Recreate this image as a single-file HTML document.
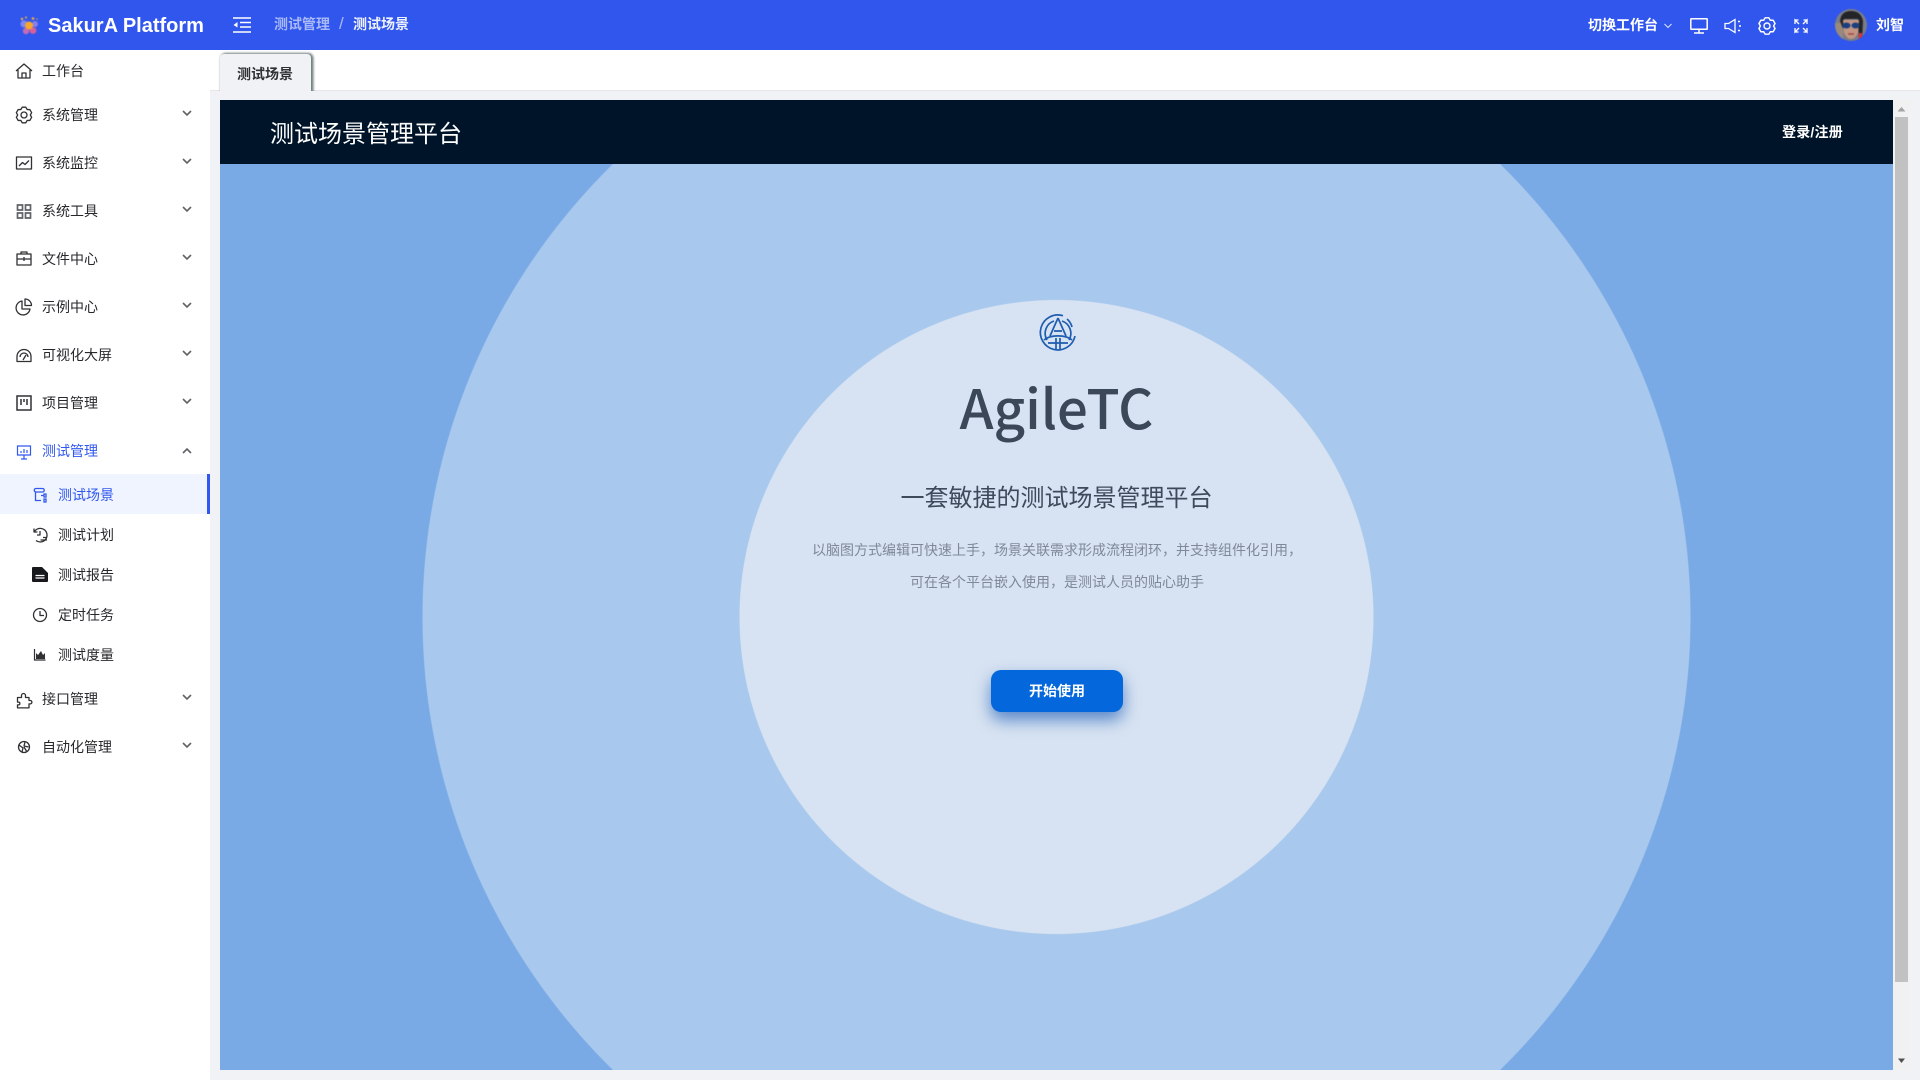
<!DOCTYPE html>
<html lang="zh"><head><meta charset="utf-8"><title>测试场景</title>
<style>
*{box-sizing:border-box}
html,body{margin:0;width:1920px;height:1080px;overflow:hidden;background:#f0f2f5;font-family:"Liberation Sans","Noto Sans CJK SC",sans-serif;font-size:14px;color:#26282b}
.a{position:absolute}
.t{position:absolute;white-space:nowrap;line-height:20px;height:20px}
svg{position:absolute;overflow:visible}
.i{fill:none;stroke:#303133;stroke-width:1.3;stroke-linejoin:round}
.c{fill:none;stroke:#606266;stroke-width:1.6}
</style></head><body>
<div class="a" style="left:0;top:0;width:1920px;height:50px;background:#3056ed"></div>
<svg style="left:18px;top:14px;filter:blur(.4px)" width="24" height="24" viewBox="0 0 24 24">
<circle cx="4" cy="5" r="1.200" fill="#f5b342"/><circle cx="8" cy="3.500" r="1" fill="#f5b342"/><circle cx="15" cy="4.500" r="1.300" fill="#f5b342"/><circle cx="19" cy="5" r=".8" fill="#d8a050"/>
<circle cx="6" cy="10" r="3.600" fill="#7f88f0"/><circle cx="17" cy="10" r="3" fill="#8a7fe8"/><circle cx="8" cy="17" r="3.200" fill="#c56bb5"/><circle cx="15" cy="16.500" r="3.400" fill="#d8609a"/><circle cx="11" cy="11.500" r="4" fill="#f6a72d"/>
</svg>
<div class="t" style="left:48px;top:16px;font-size:20px;font-weight:700;color:#fff">SakurA Platform</div>
<svg style="left:233px;top:17px" width="18" height="16" viewBox="0 0 18 16"><path d="M0 1h18M7 5.500h11M7 10h11M0 15h18" stroke="#fff" stroke-width="1.500" fill="none"/><path d="M4.500 5v5.500L0.500 8z" fill="#fff"/></svg>
<div class="t" style="left:274px;top:14px;font-weight:700;color:#a9b9f7">测试管理</div>
<div class="t" style="left:339px;top:14px;font-size:17px;color:#a9b9f7">/</div>
<div class="t" style="left:353px;top:14px;font-weight:700;color:#eef2ff">测试场景</div>
<div class="t" style="left:1588px;top:15px;font-weight:700;color:#fff">切换工作台</div>
<svg style="left:1664px;top:23px" width="8" height="6" viewBox="0 0 8 6"><path d="M.5 1l3.500 3.500L7.500 1" fill="none" stroke="#dfe6ff" stroke-width="1"/></svg>
<svg style="left:1690px;top:18px" width="18" height="16" viewBox="0 0 18 16" fill="none" stroke="#fff" stroke-width="1.500"><rect x=".8" y=".8" width="16.400" height="10.500" rx=".5"/><path d="M9 11.500v3M4 15h10"/></svg>
<svg style="left:1724px;top:18px" width="18" height="16" viewBox="0 0 18 16" fill="none" stroke="#fff" stroke-width="1.300"><path d="M1 5.500h3.500L11 1.500v13l-6.500-4H1z"/><path d="M14 3.500h2M15 8h2M14 12.500h2" stroke-width="1.500"/></svg>
<svg style="left:1758px;top:17px" width="18" height="18" viewBox="-9 -9 18 18" fill="none" stroke="#fff" stroke-width="1.400" stroke-linejoin="round"><path transform="scale(1.050)" d="M-1.800-7.800L1.800-7.800L3.150-5.460L5.850-5.460L7.650-2.340L6.300 0L7.650 2.340L5.850 5.460L3.150 5.460L1.800 7.800L-1.800 7.800L-3.150 5.460L-5.850 5.460L-7.650 2.340L-6.300 0L-7.650-2.340L-5.850-5.460L-3.150-5.460Z"/><circle r="3"/></svg>
<svg style="left:1794px;top:19px" width="14" height="14" viewBox="0 0 14 14" fill="none" stroke="#fff" stroke-width="1.300"><path d="M1 5V1l4 4M1 1h3.500M13 5V1L9 5M13 1H9.500M1 9v4l4-4M1 13h3.500M13 9v4L9 9M13 13H9.500"/></svg>
<svg style="left:1835px;top:9px;filter:blur(.4px)" width="32" height="32" viewBox="0 0 32 32"><defs><clipPath id="av"><circle cx="16" cy="16" r="16"/></clipPath></defs><g clip-path="url(#av)"><rect width="32" height="32" fill="#7b7d86"/><rect x="0" y="14" width="8" height="18" fill="#9a8a7c"/><path d="M5 12Q6 2 16 2t12 10l-1 20H24L23 10H9L8 20z" fill="#232427"/><path d="M8 11h16l-1 13q-3 6-7 6t-7-6z" fill="#c39684"/><ellipse cx="11.500" cy="16.500" rx="4" ry="3" fill="#1a3f80"/><ellipse cx="20.500" cy="16.500" rx="4" ry="3" fill="#1a3f80"/><path d="M13 25h6" stroke="#a34848" stroke-width="1.500"/><rect x="24" y="24" width="3" height="6" fill="#e0323c"/></g></svg>
<div class="t" style="left:1876px;top:15px;font-weight:700;color:#fff">刘智</div>

<div class="a" style="left:0;top:50px;width:210px;height:1030px;background:#fff"></div>
<div class="a" style="left:0;top:474px;width:210px;height:40px;background:#eff4fe"></div>
<div class="a" style="left:207px;top:474px;width:3px;height:40px;background:#3057ef"></div>
<div class="t" style="left:42px;top:61px">工作台</div>
<div class="t" style="left:42px;top:105px">系统管理</div>
<div class="t" style="left:42px;top:153px">系统监控</div>
<div class="t" style="left:42px;top:201px">系统工具</div>
<div class="t" style="left:42px;top:249px">文件中心</div>
<div class="t" style="left:42px;top:297px">示例中心</div>
<div class="t" style="left:42px;top:345px">可视化大屏</div>
<div class="t" style="left:42px;top:393px">项目管理</div>
<div class="t" style="left:42px;top:441px;color:#3057ef">测试管理</div>
<div class="t" style="left:58px;top:485px;color:#3057ef">测试场景</div>
<div class="t" style="left:58px;top:525px">测试计划</div>
<div class="t" style="left:58px;top:565px">测试报告</div>
<div class="t" style="left:58px;top:605px">定时任务</div>
<div class="t" style="left:58px;top:645px">测试度量</div>
<div class="t" style="left:42px;top:689px">接口管理</div>
<div class="t" style="left:42px;top:737px">自动化管理</div>
<svg style="left:0;top:0" width="210" height="800" viewBox="0 0 210 800">
<path class="c" d="M183 111l4 4 4-4M183 159l4 4 4-4M183 207l4 4 4-4M183 255l4 4 4-4M183 303l4 4 4-4M183 351l4 4 4-4M183 399l4 4 4-4M183 453l4-4 4 4M183 695l4 4 4-4M183 743l4 4 4-4"/>
<path class="i" d="M16 71l8-7 8 7M18 70v8h12v-8M22 78v-5h4v5"/>
<g transform="translate(24 115)"><path class="i" d="M-1.800-7.800L1.800-7.800L3.150-5.460L5.850-5.460L7.650-2.340L6.300 0L7.650 2.340L5.850 5.460L3.150 5.460L1.800 7.800L-1.800 7.800L-3.150 5.460L-5.850 5.460L-7.650 2.340L-6.300 0L-7.650-2.340L-5.850-5.460L-3.150-5.460Z"/><circle class="i" r="3"/></g>
<path class="i" d="M16.500 157h15v12h-15zM19 166l3.500-3.500 2.500 2 4-4"/>
<path d="M17.500 205h5v5h-5zM25.500 205h5v5h-5zM17.500 213h5v5h-5zM25.500 213h5v5h-5z" fill="none" stroke="#606266" stroke-width="1.700"/>
<path class="i" d="M17 254h14v11H17zM21 254v-2h6v2M17 259h14M24 257v4"/>
<path class="i" d="M22 301a7 7 0 1 0 8 8h-8z"/><path class="i" d="M25 299a6.500 6.500 0 0 1 6.500 6.500H25z"/>
<path class="i" d="M17 361.500v-5a7 7 0 0 1 14 0v5zM20 357a4 4 0 0 1 8 0M23 360l3-5"/>
<path d="M17 396h14v14H17z" fill="none" stroke="#303133" stroke-width="1.500"/><path d="M21 399v6M24 399v3M27 399v6" stroke="#303133" stroke-width="1.500" fill="none"/>
<path d="M17.500 446h13v9h-13zM21 459h6M24 455v4M21 453v-2M24 453v-4M27 453v-3" fill="none" stroke="#3057ef" stroke-width="1.200"/>
<path d="M36 488.500h6.500a1.700 1.700 0 0 1 0 3.500H36a1.700 1.700 0 0 1 0-3.500zM35.500 492v8.500H41M41 495.500h3.500M44 494h2v3h-2zM44 499h2v3h-2z" fill="none" stroke="#3057ef" stroke-width="1.300"/>
<path class="i" d="M34.500 531.500A6.800 6.800 0 1 1 36 540.500M34 528.500v3.500h3.500M40 531v4h-3M40.500 540h6.500M43 537.500h4"/>
<path d="M32 568a1 1 0 0 1 1-1h9l6 6v8a1 1 0 0 1-1 1H33a1 1 0 0 1-1-1z" fill="#17191c"/><path d="M35.500 575.500h9M35.500 578h9" stroke="#fff" stroke-width="1.200"/>
<circle class="i" cx="40" cy="615" r="6.500"/><path class="i" d="M40 611v4.500h4"/>
<path d="M34.500 649v11h11" stroke="#303133" stroke-width="1.200" fill="none"/><path d="M36 659v-6l2 2 3-4 2 4 2-2v6z" fill="#303133"/>
<path class="i" d="M17.500 697.500h4v-2a2 2 0 0 1 4 0v2h3.500v3h1.200a1.700 1.700 0 0 1 0 3.400H29v4H17.500v-3h1a1.400 1.400 0 0 0 0-2.800h-1z"/>
<circle class="i" cx="24" cy="747" r="5.500"/><path class="i" d="M19 745l4 3-1 4M25 742l-1 4 4.500 1M24 747l3 5"/>
</svg>

<div class="a" style="left:210px;top:50px;width:1710px;height:40px;background:#fff"></div>
<div class="a" style="left:210px;top:90px;width:1710px;height:1px;background:#e4e6eb"></div>
<div class="a" style="left:220px;top:54px;width:91px;height:37px;background:#f0f2f5;border-radius:4px 4px 0 0;box-shadow:1.500px 0 2px 1px rgba(40,60,60,.65)"></div>
<div class="a" style="left:210px;top:91px;width:110px;height:9px;background:#f0f2f5"></div>
<div class="t" style="left:237px;top:64px;font-weight:700;color:#303133">测试场景</div>

<div class="a" style="left:220px;top:100px;width:1673px;height:970px;overflow:hidden;background:radial-gradient(circle at 836.5px 517px,#d7e3f2 0,#d7e3f2 316.5px,#a8c8ed 317.5px,#a8c8ed 633.5px,#7aaae6 634.5px)">
  <div class="a" style="left:0;top:0;width:1673px;height:64px;background:#001429"></div>
  <div class="t" style="left:50px;top:20px;height:30px;line-height:30px;font-size:24px;color:#fff">测试场景管理平台</div>
  <div class="t" style="left:1562px;top:22px;color:#fff;font-weight:700;letter-spacing:.2px">登录/注册</div>
  <svg style="left:819px;top:214px" width="38" height="38" viewBox="0 0 38 38" fill="none" stroke="#1d5cb0" stroke-width="1.700">
    <path d="M24 1.700A17.500 17.500 0 1 0 36 22M33 13A15 15 0 0 0 28 5"/>
    <path d="M8 26A13 13 0 0 1 15 7M30 26A13 13 0 0 0 23 7"/>
    <path d="M19 4L11 22M19 4l8 18M15 17h8"/>
    <path d="M5 26a16 8 0 0 1 28 0M9 29h20M17 24v12M21 24v12"/>
  </svg>
  <div class="t" style="left:0;width:1673px;top:271px;height:70px;line-height:70px;text-align:center;font-size:54.500px;font-weight:500;color:#3b4859;font-family:'Noto Sans CJK SC','Liberation Sans',sans-serif">AgileTC</div>
  <div class="t" style="left:0;width:1673px;top:384px;height:30px;line-height:30px;text-align:center;font-size:24px;color:#3d4a5c">一套敏捷的测试场景管理平台</div>
  <div class="t" style="left:592px;top:440px;color:#7f8898">以脑图方式编辑可快速上手，场景关联需求形成流程闭环，并支持组件化引用，</div>
  <div class="t" style="left:690px;top:472px;color:#7f8898">可在各个平台嵌入使用，是测试人员的贴心助手</div>
  <div class="a" style="left:771px;top:570px;width:132px;height:42px;border-radius:10px;background:#0567dc;box-shadow:0 8px 16px rgba(5,75,175,.6);color:#fff;font-weight:700;text-align:center;line-height:42px">开始使用</div>
</div>
<div class="a" style="left:1893px;top:100px;width:17px;height:970px;background:#f1f1f1"></div>
<div class="a" style="left:1895px;top:117px;width:13px;height:865px;background:#c1c1c1"></div>
<svg style="left:1893px;top:100px" width="17" height="970" viewBox="0 0 17 970"><path d="M4.500 11.500L8.500 7l4 4.500z" fill="#a3a3a3"/><path d="M5 958.500h7L8.500 963z" fill="#505050"/></svg>
</body></html>
